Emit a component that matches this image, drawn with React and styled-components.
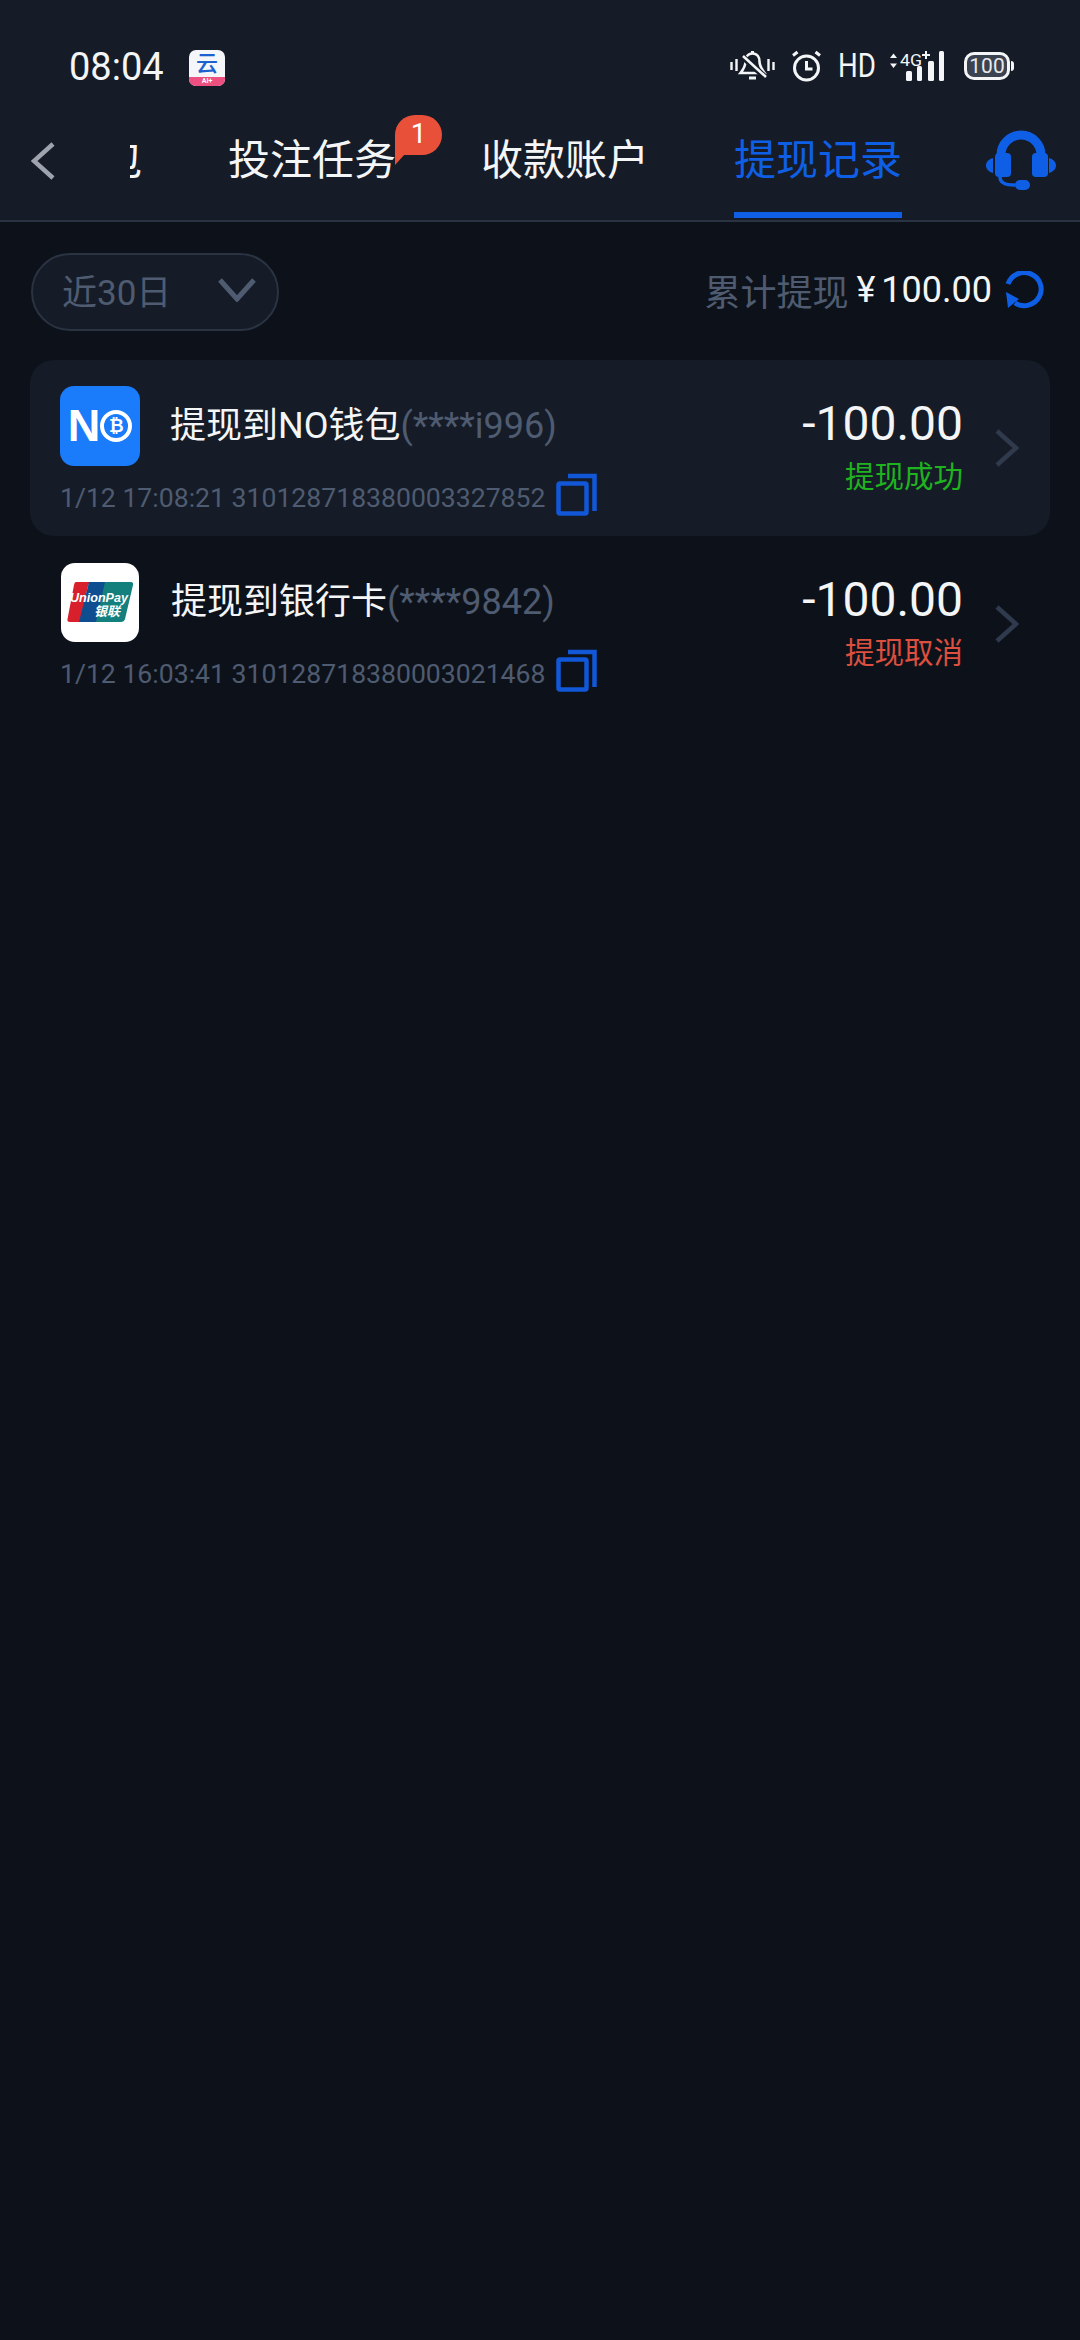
import React from 'react';
import styled, { createGlobalStyle } from 'styled-components';

const BLUE = '#0f5fe6';
const MUTED = '#4f5b70';
const PANEL = '#151c27';

const GlobalStyle = createGlobalStyle`
  html, body {
    margin: 0;
    padding: 0;
    background: #0d121a;
  }
  body {
    font-family: Roboto, "Noto Sans CJK SC", sans-serif;
  }
`;

const Page = styled.div`
  width: 1080px;
  min-height: 2340px;
  background: #0d121a;
`;

const Header = styled.header`
  background: ${PANEL};
  border-bottom: 2px solid #2a3342;
`;

const StatusBar = styled.div`
  height: 100px;
  display: flex;
  align-items: flex-start;
  padding: 50px 70px 0 69px;
  box-sizing: border-box;
`;

const Time = styled.span`
  color: #f4f5f6;
  font-size: 38px;
  line-height: 34px;
  width: 120px;
`;

const AppIcon = styled.div`
  width: 36px;
  height: 36px;
  border-radius: 7px;
  background: #f4f6fa;
  overflow: hidden;
  display: flex;
  flex-direction: column;
  align-items: center;
`;

const AppGlyph = styled.span`
  flex: 1;
  color: #1c62cf;
  font-size: 22px;
  line-height: 27px;
  font-weight: 500;
`;

const AppBand = styled.span`
  width: 100%;
  height: 9px;
  background: #ec4f80;
  color: #fff;
  font-size: 7px;
  line-height: 9px;
  font-weight: 700;
  text-align: center;
`;

const StatusIcons = styled.div`
  margin-left: auto;
  display: flex;
  align-items: center;
  height: 32px;
`;

const IconGap = styled.span`
  width: 16px;
`;

const HdLabel = styled.span`
  color: #f4f5f6;
  font-size: 33px;
  line-height: 32px;
  display: inline-block;
  width: 37px;
  margin: 0 14px 0 16px;
  transform: scaleX(0.84);
  transform-origin: left center;
`;

const Battery = styled.div`
  position: relative;
  width: 46px;
  height: 28px;
  margin-left: 19px;
  border: 3px solid #f4f5f6;
  border-radius: 10px;
  box-sizing: border-box;
  background: #3b4250;
  color: #e8e9eb;
  font-size: 21px;
  line-height: 22px;
  text-align: center;

  &::after {
    content: '';
    position: absolute;
    right: -7px;
    top: 6px;
    width: 3px;
    height: 10px;
    border-radius: 0 3px 3px 0;
    background: #f4f5f6;
  }
`;

const NavBar = styled.nav`
  height: 120px;
  display: flex;
  align-items: flex-start;
  padding-left: 31px;
  box-sizing: border-box;
`;

const BackButton = styled.div`
  width: 24px;
  height: 38px;
  margin-top: 42px;
`;

const ClippedTab = styled.div`
  width: 12px;
  height: 50px;
  margin: 36px 86px 0 75px;
  overflow: hidden;
  display: flex;
  justify-content: flex-end;
  color: #f4f5f6;
  font-size: 42px;
  line-height: 50px;
  white-space: nowrap;
`;

const Tab = styled.div`
  position: relative;
  width: 168px;
  height: 118px;
  margin-right: 85px;
  padding-top: 36px;
  box-sizing: border-box;
  border-bottom: 6px solid ${p => (p.$active ? BLUE : 'transparent')};
  color: ${p => (p.$active ? BLUE : '#f4f5f6')};
  font-size: 42px;
  line-height: 50px;
  text-align: center;
  white-space: nowrap;
`;

const Badge = styled.span`
  position: absolute;
  left: 167px;
  top: 15px;
  width: 47px;
  height: 40px;
  border-radius: 20px 20px 20px 6px;
  background: #e8503a;
  color: #fff;
  font-size: 28px;
  line-height: 38px;
  text-align: center;

  &::after {
    content: '';
    position: absolute;
    left: 0;
    top: 28px;
    border-right: 20px solid transparent;
    border-top: 22px solid #e8503a;
  }
`;

const Headset = styled.svg`
  width: 71px;
  height: 60px;
  margin: 30px 0 0 -2px;
  flex: none;
`;

const FilterRow = styled.div`
  display: flex;
  align-items: center;
  justify-content: space-between;
  padding: 31px 36px 29px 31px;
`;

const RangePill = styled.div`
  width: 248px;
  height: 78px;
  padding: 0 21px 5px 29px;
  box-sizing: border-box;
  display: flex;
  align-items: center;
  justify-content: space-between;
  border: 2px solid #2a3342;
  border-radius: 39px;
  background: ${PANEL};
  color: ${MUTED};
  font-size: 35px;
`;

const Summary = styled.div`
  display: flex;
  align-items: center;
  margin-bottom: 4px;
  font-size: 36px;
  color: ${MUTED};
`;

const SummaryValue = styled.span`
  color: #f4f5f6;
  font-size: 36px;
  margin: 0 12px 0 8px;
  word-spacing: -3px;
`;

const List = styled.div`
  margin: 0 30px;
`;

const Row = styled.div`
  height: 176px;
  padding: 0 31px 0 30px;
  box-sizing: border-box;
  display: flex;
  border-radius: 24px;
  background: ${p => (p.$active ? PANEL : 'transparent')};
`;

const RowMain = styled.div`
  flex: 1;
`;

const TitleLine = styled.div`
  height: 80px;
  margin-top: 26px;
  display: flex;
  align-items: center;
  gap: 30px;
`;

const Logo = styled.div`
  position: relative;
  width: ${p => (p.$card ? 78 : 80)}px;
  height: ${p => (p.$card ? 79 : 80)}px;
  margin-right: ${p => (p.$card ? 2 : 0)}px;
  margin-left: ${p => (p.$card ? 1 : 0)}px;
  flex: none;
  border-radius: 14px;
  background: ${p => (p.$card ? '#fff' : '#1a7bfb')};
  display: flex;
  align-items: center;
  justify-content: center;
  overflow: hidden;
`;

const Title = styled.div`
  color: #f4f5f6;
  font-size: 36px;
  line-height: 48px;
  white-space: nowrap;
`;

const Masked = styled.span`
  color: ${MUTED};
`;

const MetaLine = styled.div`
  height: 44px;
  margin-top: 9px;
  display: flex;
  align-items: center;
  gap: 11px;
  color: ${MUTED};
  font-size: 26.6px;
  white-space: nowrap;
`;

const RowRight = styled.div`
  padding-top: 36px;
  display: flex;
  flex-direction: column;
  align-items: flex-end;
`;

const Amount = styled.div`
  color: #f4f5f6;
  font-size: 48px;
  line-height: 56px;
`;

const RowStatus = styled.div`
  margin-top: 7px;
  color: ${p => (p.$ok ? '#1fb31f' : '#dd4f3e')};
  font-size: 29.5px;
  line-height: 36px;
`;

const RowChevron = styled.svg`
  width: 24px;
  height: 38px;
  margin: 69px 0 0 32px;
  flex: none;
`;

const CopyGlyph = styled.svg`
  width: 41px;
  height: 43px;
  margin-bottom: 6px;
  flex: none;
`;

const NoMark = styled.span`
  color: #fff;
  font-family: "Liberation Sans", sans-serif;
  font-size: 45px;
  font-weight: 700;
  line-height: 44px;
  letter-spacing: -2px;
`;

const CoinMark = styled.span`
  width: 24px;
  height: 24px;
  margin-left: 2px;
  border: 4px solid #fff;
  border-radius: 50%;
  color: #fff;
  font-size: 18px;
  font-weight: 700;
  line-height: 24px;
  text-align: center;
  font-family: "DejaVu Sans", sans-serif;
`;

const Silent = () => (
  <svg width="45" height="32" viewBox="0 0 45 32" fill="none" stroke="#f4f5f6" strokeWidth="2.6">
    <path d="M1.5 12v8M6.5 9v12M38.5 9v12M43.5 12v8" strokeWidth="2.4" />
    <path d="M22.500 3.500c-5 0-7 4-7 8 0 5-3 9-5 11.500h24c-2-3-5-6.500-5-11.500 0-4-2-8-7-8z" />
    <path d="M22.500 1v2M19 28h7" strokeWidth="3" />
    <path d="M13 7l22 20" stroke="#151c27" strokeWidth="6" />
    <path d="M13 6l23 21" />
  </svg>
);

const Alarm = () => (
  <svg width="31" height="32" viewBox="0 0 31 32" fill="none" stroke="#f4f5f6" strokeWidth="3">
    <circle cx="15.500" cy="18" r="12" />
    <path d="M15.500 11v8h6M2 5.500L6.500 2M29 5.500L24.500 2" />
  </svg>
);

const Signal = () => (
  <svg width="56" height="32" viewBox="0 0 56 32" fill="#f4f5f6">
    <path d="M4.500 3.500L8 8H1zM4.500 18L1 13.500h7z" />
    <text x="11" y="16" fontFamily="Roboto, sans-serif" fontSize="17" textLength="22" lengthAdjust="spacingAndGlyphs">4G</text>
    <path d="M36 1h2v3h3v2h-3v3h-2V6h-3V4h3z" />
    <rect x="17" y="21" width="6" height="10" rx="1.500" />
    <rect x="28" y="16" width="5" height="15" rx="1.500" />
    <rect x="39" y="11" width="6" height="20" rx="1.500" />
    <rect x="50" y="1" width="5" height="30" rx="1.500" />
  </svg>
);

const CopyIcon = () => (
  <CopyGlyph viewBox="0 0 41 43" fill="none" stroke="#1257d8" strokeWidth="4.500">
    <rect x="2.500" y="10.500" width="28" height="30" rx="1.500" />
    <path d="M12 3h26.500v35" />
  </CopyGlyph>
);

const ChevronRight = () => (
  <RowChevron viewBox="0 0 24 38" fill="none" stroke="#2f3a4d" strokeWidth="4.500">
    <path d="M2 2l19 17L2 36" />
  </RowChevron>
);

const UnionPayLogo = () => (
  <svg width="66" height="42" viewBox="0 0 66 42">
    <path d="M9 1h16c-2 0-3 1-4 4l-8 36H3c-2 0-3-1-2.500-3L7 4c.5-2 1-3 2-3z" fill="#d8202c" />
    <path d="M22 1h18l-9 40H12z" fill="#0e4d8f" />
    <path d="M38 1h25c2.500 0 3.500 1 3 3L58 38c-.5 2-2 3-4 3H29z" fill="#13807e" />
    <text x="3" y="21" fill="#fff" fontFamily="Liberation Sans, sans-serif" fontSize="12" fontStyle="italic" fontWeight="700" textLength="58" lengthAdjust="spacingAndGlyphs">UnionPay</text>
    <text x="27" y="35" fill="#fff" fontFamily="Noto Sans CJK SC, sans-serif" fontSize="13" fontStyle="italic" fontWeight="700">银联</text>
  </svg>
);

const records = [
  {
    id: 'no',
    title: '提现到NO钱包',
    account: '(****i996)',
    meta: '1/12 17:08:21  310128718380003327852',
    status: '提现成功',
    ok: true,
  },
  {
    id: 'card',
    title: '提现到银行卡',
    account: '(****9842)',
    meta: '1/12 16:03:41  310128718380003021468',
    status: '提现取消',
    ok: false,
  },
];

const App = () => (
  <Page>
    <GlobalStyle />
    <Header>
      <StatusBar>
        <Time>08:04</Time>
        <AppIcon>
          <AppGlyph>云</AppGlyph>
          <AppBand>AI+</AppBand>
        </AppIcon>
        <StatusIcons>
          <Silent />
          <IconGap />
          <Alarm />
          <HdLabel>HD</HdLabel>
          <Signal />
          <Battery>100</Battery>
        </StatusIcons>
      </StatusBar>
      <NavBar>
        <BackButton>
          <svg width="24" height="38" viewBox="0 0 24 38" fill="none" stroke="#9ea3ad" strokeWidth="4.500">
            <path d="M22 2L3 19l19 17" />
          </svg>
        </BackButton>
        <ClippedTab>包</ClippedTab>
        <Tab>
          投注任务
          <Badge>1</Badge>
        </Tab>
        <Tab>收款账户</Tab>
        <Tab $active>提现记录</Tab>
        <Headset viewBox="0 0 71 60" fill={BLUE}>
          <path d="M16 28v-3a20 20 0 0 1 40 0v3" fill="none" stroke={BLUE} strokeWidth="9" />
          <rect x="10" y="23" width="16" height="24" rx="4" />
          <rect x="47" y="23" width="16" height="24" rx="4" />
          <path d="M8 28c-4 1-7 4-7 7.500s3 6.500 7 7.500zM64 28c4 1 7 4 7 7.500s-3 6.500-7 7.500z" />
          <path d="M15 47c0 6 5 8 15 8" fill="none" stroke={BLUE} strokeWidth="3.500" />
          <rect x="30" y="50" width="15" height="10" rx="5" />
        </Headset>
      </NavBar>
    </Header>
    <FilterRow>
      <RangePill>
        近30日
        <svg width="38" height="24" viewBox="0 0 38 24" fill="none" stroke="#4f5b70" strokeWidth="5">
          <path d="M2 2l17 19L36 2" />
        </svg>
      </RangePill>
      <Summary>
        累计提现
        <SummaryValue>¥ 100.00</SummaryValue>
        <svg width="40" height="38" viewBox="0 0 40 38" fill="none">
          <path d="M4 13A17 16.500 0 1 1 11 32" stroke={BLUE} strokeWidth="5" />
          <path d="M2 21l13 7-11 9z" fill={BLUE} />
        </svg>
      </Summary>
    </FilterRow>
    <List>
      {records.map(item => (
        <Row key={item.id} $active={item.ok}>
          <RowMain>
            <TitleLine>
              {item.id === 'no' ? (
                <Logo>
                  <NoMark>N</NoMark>
                  <CoinMark>₿</CoinMark>
                </Logo>
              ) : (
                <Logo $card>
                  <UnionPayLogo />
                </Logo>
              )}
              <Title>
                {item.title}
                <Masked>{item.account}</Masked>
              </Title>
            </TitleLine>
            <MetaLine>
              {item.meta}
              <CopyIcon />
            </MetaLine>
          </RowMain>
          <RowRight>
            <Amount>-100.00</Amount>
            <RowStatus $ok={item.ok}>{item.status}</RowStatus>
          </RowRight>
          <ChevronRight />
        </Row>
      ))}
    </List>
  </Page>
);

export default App;
